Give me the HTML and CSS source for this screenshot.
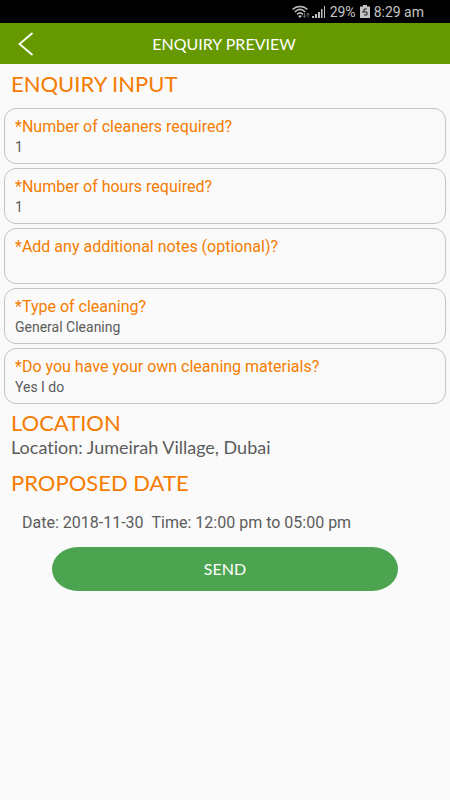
FILE: index.html
```html
<!DOCTYPE html>
<html lang="en">
<head>
<meta charset="utf-8">
<meta name="viewport" content="width=device-width, initial-scale=1">
<title>Enquiry Preview</title>
<link rel="stylesheet" href="styles.css">
</head>
<body>
<div class="status">
  <svg class="wifi" width="19" height="14" viewBox="0 0 19 14" aria-hidden="true">
    <g fill="none" stroke="#bdbdbd" stroke-width="1.5">
      <path d="M.6 4.600C4.500 .4 11.500 .4 15.400 4.600"/>
      <path d="M2.800 7C6 3.800 10 3.800 13.200 7"/>
      <path d="M5 9.400C6.800 7.600 9.200 7.600 11 9.400"/>
    </g>
    <path d="M6 11Q8 9.600 10 11L8 13Z" fill="#bdbdbd"/>
    <path d="M12.500 8v4M11 10.500l1.500 2 1.500-2M16 12.500v-4M14.500 10l1.500-2 1.500 2" fill="none" stroke="#666"/>
  </svg>
  <svg class="signal" width="14" height="12" viewBox="0 0 14 12" aria-hidden="true">
    <path d="M0 10h2v2H0zM3 8h2v4H3zM6 6h2v6H6zM9 3h1.500v9H9zM12 0h1v12h-1z" fill="#bdbdbd"/>
  </svg>
  <span>29%</span>
  <svg class="battery" width="10" height="13" viewBox="0 0 10 13" aria-hidden="true">
    <path d="M3 0h4v1.500h3V13H0V1.500h3z" fill="#c4c4c4"/>
    <path d="M7 4H4V7H7V10H4M2 7h2" fill="none" stroke="#222"/>
  </svg>
  <span>8:29 am</span>
</div>
<header class="bar">
  <button class="back" type="button" aria-label="Back">
    <svg width="16" height="24" viewBox="0 0 16 24" aria-hidden="true"><path d="M14.500 1L1.500 12L14.500 23" fill="none" stroke="#fff" stroke-width="1.800"/></svg>
  </button>
  <h1 class="title">ENQUIRY PREVIEW</h1>
</header>
<main class="content">
  <h2 class="heading">ENQUIRY INPUT</h2>
  <dl class="answers">
    <div class="card"><dt>*Number of cleaners required?</dt><dd>1</dd></div>
    <div class="card"><dt>*Number of hours required?</dt><dd>1</dd></div>
    <div class="card"><dt>*Add any additional notes (optional)?</dt><dd></dd></div>
    <div class="card"><dt>*Type of cleaning?</dt><dd>General Cleaning</dd></div>
    <div class="card"><dt>*Do you have your own cleaning materials?</dt><dd>Yes I do</dd></div>
  </dl>
  <h2 class="heading">LOCATION</h2>
  <p class="location">Location: Jumeirah Village, Dubai</p>
  <h2 class="heading">PROPOSED DATE</h2>
  <p class="schedule"><span>Date: 2018-11-30</span><span>Time: 12:00 pm to 05:00 pm</span></p>
  <button class="send" type="button">SEND</button>
</main>
</body>
</html>
```
FILE: styles.css
```css
* {
  box-sizing: border-box;
}

body {
  margin: 0;
  background: #fafafa;
  color: #5c5c5c;
  font-family: Roboto, sans-serif;
  font-variant-ligatures: none;
}

h1, h2, p, dl, dd {
  margin: 0;
}

.status {
  display: flex;
  align-items: center;
  justify-content: flex-end;
  gap: 4px;
  height: 23px;
  padding-right: 26px;
  background: #000;
  color: #c4c4c4;
  font-size: 14px;
}

.wifi {
  margin-right: -3px;
}

.bar {
  display: grid;
  grid-template-columns: 50px 1fr 52px;
  align-items: center;
  height: 41px;
  background: #669900;
}

.back {
  display: flex;
  align-items: center;
  height: 41px;
  padding: 0 0 0 18px;
  border: 0;
  background: none;
}

.title {
  color: #fff;
  font-family: Lato, sans-serif;
  font-size: 16px;
  font-weight: 400;
  line-height: 20px;
  text-align: center;
}

.content {
  padding: 8px 4px;
}

.heading {
  padding: 0 7px;
  color: #f57c00;
  font-family: Lato, sans-serif;
  font-size: 22px;
  font-weight: 400;
  line-height: 24px;
}

.answers {
  display: grid;
  gap: 4px;
  margin: 12px 0 7px;
}

.card {
  height: 56px;
  padding: 8px 10px;
  border: 1px solid #c4c4c4;
  border-radius: 12px;
}

.card dt {
  color: #f57c00;
  font-size: 16px;
  line-height: 20px;
}

.card dd {
  font-size: 14px;
  line-height: 20px;
}

.location {
  padding: 0 7px;
  margin-bottom: 12px;
  font-family: Lato, sans-serif;
  font-size: 18px;
  line-height: 24px;
}

.schedule {
  display: flex;
  gap: 8px;
  padding: 0 18px;
  margin: 16px 0 12px;
  font-size: 16px;
  line-height: 24px;
}

.send {
  display: block;
  width: calc(100% - 96px);
  height: 44px;
  margin: 0 auto;
  border: 0;
  border-radius: 26px / 22px;
  background: #4ca450;
  color: #fff;
  font-family: Lato, sans-serif;
  font-size: 16px;
  line-height: 20px;
}
```
